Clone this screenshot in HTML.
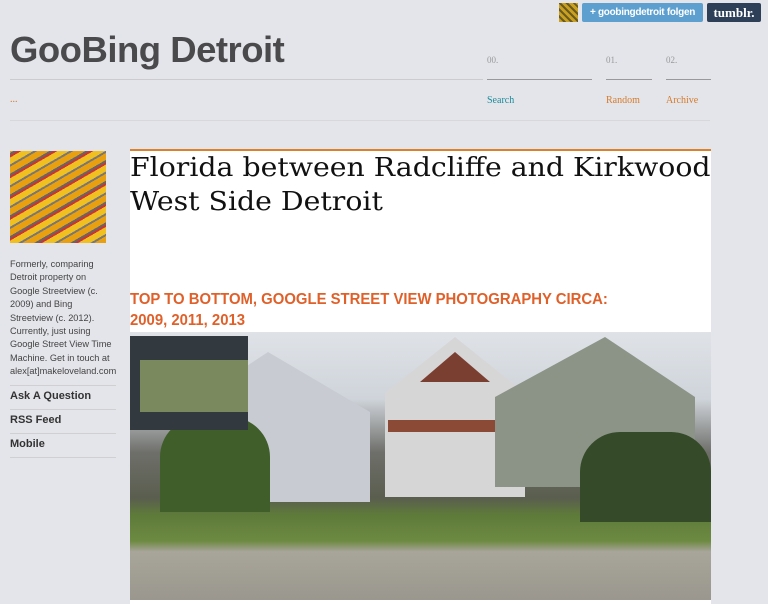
<!DOCTYPE html>
<html><head><meta charset="utf-8"><style>
body{margin:0;width:768px;height:602px;background:#e4e5ea;font-family:"Liberation Sans",sans-serif;position:relative;overflow:hidden}
.a{position:absolute}
.serif{font-family:"Liberation Serif",serif}
</style></head><body>
<div class="a" style="left:559px;top:3px;width:19px;height:19px;background:repeating-linear-gradient(45deg,#c9a020 0 3px,#6b5a20 3px 5px)"></div>
<div class="a" style="left:582px;top:3px;width:121px;height:19px;background:#5da0cf;border-radius:2px;color:#fff;font-size:10px;font-weight:bold;line-height:19px;text-align:center;white-space:nowrap;letter-spacing:-0.3px">+ goobingdetroit folgen</div>
<div class="a" style="left:707px;top:3px;width:54px;height:19px;background:#2d4058;border-radius:2px;color:#fff;font-size:13px;font-weight:bold;line-height:19px;text-align:center;font-family:'Liberation Serif',serif">tumblr.</div>
<div class="a" style="left:10px;top:29px;font-size:36.5px;font-weight:bold;color:#4a4a4c;letter-spacing:-0.5px">GooBing Detroit</div>
<div class="a" style="left:10px;top:79px;width:473px;height:1px;background:#ccc"></div>
<div class="a" style="left:10px;top:120px;width:700px;height:1px;background:#d8d8d8"></div>
<div class="a serif" style="left:10px;top:94px;color:#d67b2a;font-size:10px">...</div>
<div class="a serif" style="left:487px;top:55px;color:#999;font-size:9px">00.</div>
<div class="a serif" style="left:606px;top:55px;color:#999;font-size:9px">01.</div>
<div class="a serif" style="left:666px;top:55px;color:#999;font-size:9px">02.</div>
<div class="a" style="left:487px;top:79px;width:105px;height:1px;background:#999"></div>
<div class="a" style="left:606px;top:79px;width:46px;height:1px;background:#999"></div>
<div class="a" style="left:666px;top:79px;width:45px;height:1px;background:#999"></div>
<div class="a serif" style="left:487px;top:95px;color:#1c8b9a;font-size:10px">Search</div>
<div class="a serif" style="left:606px;top:95px;color:#d67b2a;font-size:10px">Random</div>
<div class="a serif" style="left:666px;top:95px;color:#d67b2a;font-size:10px">Archive</div>
<div class="a" style="left:10px;top:151px;width:96px;height:92px;background:repeating-linear-gradient(-30deg,#e8a010 0 6px,#777 6px 8px,#f0c020 8px 14px,#c33 14px 16px,#666 16px 18px)"></div>
<div class="a" style="left:10px;top:258px;white-space:nowrap;font-size:9.2px;line-height:13.4px;color:#444">Formerly, comparing<br>Detroit property on<br>Google Streetview (c.<br>2009) and Bing<br>Streetview (c. 2012).<br>Currently, just using<br>Google Street View Time<br>Machine. Get in touch at<br>alex[at]makeloveland.com</div>
<div class="a" style="left:10px;top:385px;width:106px;height:1px;background:#d0d0d0"></div>
<div class="a" style="left:10px;top:390px;font-size:11px;font-weight:bold;color:#333">Ask A Question</div>
<div class="a" style="left:10px;top:409px;width:106px;height:1px;background:#d0d0d0"></div>
<div class="a" style="left:10px;top:414px;font-size:11px;font-weight:bold;color:#333">RSS Feed</div>
<div class="a" style="left:10px;top:433px;width:106px;height:1px;background:#d0d0d0"></div>
<div class="a" style="left:10px;top:438px;font-size:11px;font-weight:bold;color:#333">Mobile</div>
<div class="a" style="left:10px;top:457px;width:106px;height:1px;background:#d0d0d0"></div>
<div class="a" style="left:130px;top:149px;width:581px;height:453px;background:#fff;border-top:2px solid #d9822b"></div>
<div class="a" style="left:130px;top:151px;font-family:'DejaVu Serif',serif;font-size:26px;line-height:34px;color:#111;white-space:nowrap;transform:scaleX(1.09);transform-origin:left">Florida between Radcliffe and Kirkwood<br>West Side Detroit</div>
<div class="a" style="left:130px;top:289px;font-size:16px;line-height:21px;font-weight:bold;color:#e0602a;white-space:nowrap;transform:scaleX(0.93);transform-origin:left">TOP TO BOTTOM, GOOGLE STREET VIEW PHOTOGRAPHY CIRCA:<br>2009, 2011, 2013</div>
<div class="a" style="left:130px;top:332px;width:581px;height:268px;background:linear-gradient(#dfe3e8 0,#cfd4da 25%,#6e6f6a 45%,#5a5e4e 62%,#5e7a3a 68%,#6d8a42 78%,#a8a59a 82%,#9a978e 100%);overflow:hidden">
 <div class="a" style="left:70px;top:20px;width:170px;height:150px;background:#c8ccd2;clip-path:polygon(0 30%,40% 0,100% 40%,100% 100%,0 100%)"></div>
 <div class="a" style="left:255px;top:5px;width:140px;height:160px;background:#d6d6d6;clip-path:polygon(0 35%,50% 0,100% 35%,100% 100%,0 100%)"></div>
 <div class="a" style="left:290px;top:20px;width:70px;height:30px;background:#7a3f30;clip-path:polygon(0 100%,50% 0,100% 100%)"></div>
 <div class="a" style="left:258px;top:88px;width:115px;height:12px;background:#8a4a35"></div>
 <div class="a" style="left:365px;top:5px;width:200px;height:150px;background:#8c9488;clip-path:polygon(0 40%,55% 0,100% 40%,100% 100%,0 100%)"></div>
 <div class="a" style="left:450px;top:100px;width:131px;height:90px;background:#354a28;border-radius:40px 40px 0 0"></div>
 <div class="a" style="left:30px;top:85px;width:110px;height:95px;background:#3f5e2a;border-radius:40px 40px 0 0"></div>
 <div class="a" style="left:0;top:4px;width:118px;height:94px;background:#333a3f"></div>
 <div class="a" style="left:10px;top:28px;width:108px;height:52px;background:#7a8a5e"></div>
</div>
</body></html>
